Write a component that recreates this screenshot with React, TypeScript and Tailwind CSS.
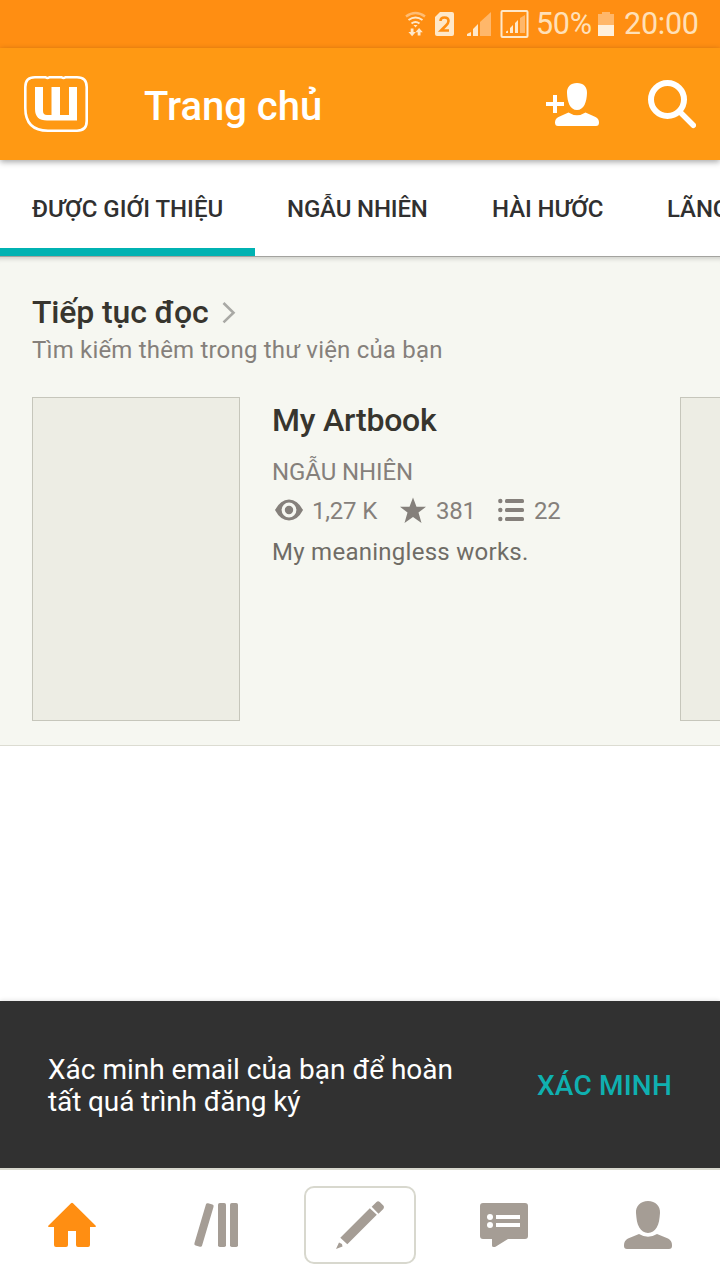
import type { ReactNode } from 'react'

const TABS = [
  { label: 'ĐƯỢC GIỚI THIỆU', className: 'w-[255px] tracking-[0.01px]' },
  { label: 'NGẪU NHIÊN', className: 'w-[205px] tracking-[-0.15px]' },
  { label: 'HÀI HƯỚC', className: 'w-[175px] tracking-[-0.1px]' },
  { label: 'LÃNG MẠN', className: 'w-[180px] tracking-[-0.1px]' },
]

function StatusBar() {
  return (
    <div className="flex h-12 shrink-0 items-center justify-end bg-[#ff8e12] pr-[21px] text-[#ffe0b8]">
      <svg width="132" height="48" viewBox="400 0 132 48" fill="none">
        {/* wifi with traffic arrows */}
        <path d="M406 16.500q9.500-7 19 0" stroke="#ffbd74" strokeWidth="2.500" />
        <path d="M408.500 20q7-5 14 0M411.500 23.500q4-3 8 0" stroke="#ffe8c9" strokeWidth="2" />
        <path d="M413.500 25h4l-2 2.500zM410.700 28.500h2.800v3.500h2.300l-3.700 4.200-3.700-4.200h2.300zM417.700 35.500v-3.300h-2.300l3.700-4.200 3.700 4.200h-2.300v3.300z" fill="#ffe8c9" />
        {/* sim 2 */}
        <path d="M440 12h12q2 0 2 2v20q0 2-2 2h-15q-2 0-2-2V17z" fill="#ffe8c9" />
        <path d="M440.500 21q0-3.500 4-3.500t4 3.500q0 2-2.500 4.500L441 30.500h8" stroke="#ff8e12" strokeWidth="2.600" />
        {/* mobile signal */}
        <path d="M467 36v-2l4-2v4zM473 36v-7l5-5v12z" fill="#ffe8c9" />
        <path d="M480 36V22l11-10v24z" fill="#ffb76a" />
        <rect x="501.500" y="11" width="26" height="26" rx="1" stroke="#ffe8c9" strokeWidth="2" />
        <path d="M506 33v-1.500l2-1V33zM510 33v-5l3-3v8zM515 33V23l3-3v13z" fill="#ffe8c9" />
        <path d="M520 33V18l5-3v18z" fill="#ffb76a" />
      </svg>
      <span className="ml-1 w-14 text-[30.5px] leading-[46px] tracking-[-0.3px] whitespace-nowrap">50%</span>
      <svg className="ml-[6px]" width="16" height="48" viewBox="598 0 16 48">
        <path d="M598 14h4v-2h8v2h4v12h-16z" fill="#ffb76a" />
        <path d="M598 25h16v11h-16z" fill="#fff0dc" />
      </svg>
      <span className="ml-[10px] w-[75px] text-[30.5px] leading-[46px] tracking-[-0.25px] whitespace-nowrap">20:00</span>
    </div>
  )
}

function Header() {
  return (
    <header className="z-20 flex h-28 shrink-0 items-center bg-[#ff9913] px-6 text-white shadow-[0_2px_6px_rgba(0,0,0,0.35)]">
      <svg width="64" height="56" viewBox="24 76 64 56" fill="none">
        <path
          d="M35 77.300h10.500q2 1.400 4 0h12q2 1.400 4 0H77q9.700 0 9.700 9.700v34q0 9.700-9.700 9.700H48Q25.300 130.700 25.300 108V87q0-9.700 9.700-9.700z"
          stroke="#fff"
          strokeWidth="2.600"
        />
        <path d="M35 87h8v24q0 4 4 4h4.500V87h8.500v28h9V87h8v33.500H47Q35 120.500 35 109z" fill="#fff" />
      </svg>
      <h1 className="ml-14 pt-[5px] text-[40px] leading-[48px] font-medium whitespace-nowrap">Trang chủ</h1>
      <svg className="ml-auto" width="54" height="56" viewBox="546 76 54 56" fill="#fff">
        <path d="M553 95h4v7h7v4h-7v7h-4v-7h-7v-4h7z" />
        <path d="M577 83c6.500 0 10.300 4 10 10-.3 9-3 17-10 17s-9.700-8-10-17c-.3-6 3.500-10 10-10z" />
        <path d="M568.500 112.500q8.500 5.500 17 0l10 4.500q3.500 1.700 3.500 5.500 0 3.500-3 3.500h-38q-3 0-3-3.500 0-3.800 3.500-5.500z" />
      </svg>
      <svg className="ml-12" width="48" height="56" viewBox="648 76 48 56" fill="none" stroke="#fff">
        <circle cx="667.500" cy="99.500" r="16.500" strokeWidth="6" />
        <path d="M680 112l13.300 13.300" strokeWidth="5.500" strokeLinecap="round" />
      </svg>
    </header>
  )
}

function Tabs() {
  return (
    <nav className="z-10 flex h-24 shrink-0 overflow-hidden bg-white">
      {TABS.map((tab, i) => (
        <div
          key={tab.label}
          className={`${tab.className} shrink-0 border-b-8 pt-[33px] pl-8 text-[24px] leading-8 font-medium whitespace-nowrap text-[#303030] ${i === 0 ? 'border-[#00b2b2]' : 'border-transparent'}`}
        >
          {tab.label}
        </div>
      ))}
    </nav>
  )
}

function Stats() {
  return (
    <div className="flex h-8 items-center text-[24px] leading-8 tracking-[-0.2px] text-[#85807b]">
      <svg width="32" height="32" viewBox="272 494 32 32">
        <path d="M275 510q5.500-10.500 14-10.500T303 510q-5.500 10.500-14 10.500T275 510z" fill="#85807b" />
        <circle cx="289" cy="510" r="5.800" fill="none" stroke="#f6f7f1" strokeWidth="3.200" />
      </svg>
      <span className="ml-2 w-[68px] pt-px whitespace-nowrap">1,27 K</span>
      <svg className="ml-[18px]" width="30" height="32" viewBox="398 494 30 32" fill="#85807b">
        <path d="M413 497.500l3.500 9.300h9.500l-7.500 5.800 3 10.400-8.500-6-8.500 6 3-10.400-7.500-5.800h9.500z" />
      </svg>
      <span className="ml-2 w-[40px] pt-px whitespace-nowrap">381</span>
      <svg className="ml-[21px]" width="28" height="32" viewBox="497 494 28 32" fill="#85807b">
        {[501, 510, 519].map((y) => (
          <g key={y}>
            <circle cx="500.300" cy={y} r="2.200" />
            <rect x="505" y={y - 2} width="19" height="4" rx="1.500" />
          </g>
        ))}
      </svg>
      <span className="ml-[9px] pt-px">22</span>
    </div>
  )
}

function ContinueReading() {
  return (
    <section className="h-[490px] shrink-0 overflow-hidden border-t border-b border-t-[#a3a39f] border-b-[#dcdcd2] bg-[#f6f7f1] pl-8 shadow-[inset_0_6px_4px_-4px_rgba(0,0,0,0.16)]">
      <div className="mt-[39px] flex h-8 items-center">
        <h2 className="w-[177px] text-[32px] leading-8 font-medium tracking-[-0.15px] whitespace-nowrap text-[#37352e]">Tiếp tục đọc</h2>
        <svg className="ml-[13px]" width="14" height="24" viewBox="222 301 14 24" fill="none">
          <path d="M223.500 304l10 9.700-10 9.700" stroke="#a9a9a5" strokeWidth="2.600" />
        </svg>
      </div>
      <p className="mt-[6px] text-[24px] leading-8 tracking-[0.19px] whitespace-nowrap text-[#85807b]">Tìm kiếm thêm trong thư viện của bạn</p>

      <div className="mt-[31px] flex">
        <div className="h-[324px] w-52 shrink-0 border border-[#c6c6bb] bg-[#edede4]" />
        <div className="ml-8 w-[408px] shrink-0 pt-[3px]">
          <h3 className="text-[32px] leading-10 font-medium tracking-[-0.2px] text-[#37352e]">My Artbook</h3>
          <p className="mt-4 text-[24px] leading-8 tracking-[-0.1px] text-[#85807b]">NGẪU NHIÊN</p>
          <div className="mt-[6px]">
            <Stats />
          </div>
          <p className="mt-[10px] text-[24px] leading-8 tracking-[0.27px] text-[#6f6c66]">My meaningless works.</p>
        </div>
        <div className="h-[324px] w-52 shrink-0 border border-[#c6c6bb] bg-[#edede4]" />
      </div>
    </section>
  )
}

function VerifyBar() {
  return (
    <div className="flex h-[167px] shrink-0 items-center justify-between bg-[#313131] px-12 pt-[2px] text-[28px] leading-8 shadow-[0_-1px_4px_rgba(0,0,0,0.1)]">
      <p className="whitespace-nowrap text-white">
        Xác minh email của bạn để hoàn
        <br />
        <span className="tracking-[-0.12px]">tất quá trình đăng ký</span>
      </p>
      <button className="font-medium tracking-[0.2px] whitespace-nowrap text-[#0fb0b0]">XÁC MINH</button>
    </div>
  )
}

function NavItem({ children }: { children: ReactNode }) {
  return <div className="flex flex-1 items-center justify-center">{children}</div>
}

function BottomNav() {
  return (
    <nav className="z-10 flex h-28 shrink-0 border-t-2 border-[#d8d8ce] bg-white">
      <NavItem>
        <svg width="48" height="48" viewBox="48 1201 48 48" fill="#ff8e12">
          <path d="M71 1203.300q1-.9 2 0l23 22.700q0 1-1 1h-5v18q0 2-2 2H78q-2 0-2-2v-14h-8v14q0 2-2 2H56q-2 0-2-2v-18h-5q-1 0-1-1z" />
        </svg>
      </NavItem>
      <NavItem>
        <svg width="48" height="48" viewBox="192 1201 48 48" fill="#a59d95">
          <rect x="200" y="1203" width="8" height="44" rx="1.800" transform="rotate(16.500 204 1225)" />
          <rect x="218" y="1203" width="8" height="44" rx="1.800" />
          <rect x="230" y="1203" width="8" height="44" rx="1.800" />
        </svg>
      </NavItem>
      <NavItem>
        <div className="flex h-[78px] w-28 items-center justify-center rounded-[10px] border-2 border-[#d8d8ce]">
          <svg width="48" height="48" viewBox="336 1201 48 48" fill="#a59d95">
            <path d="M336 1249l3-6.500 3 1.500.5 2.500zM340.300 1237.800l29.500-29.500 7 6.500-29.500 29.500zM371.700 1206.700l4.800-4.800q1.500-1.300 3.300 0l3.500 3.500q1.300 1.500 0 3.500l-4.800 4.800z" />
          </svg>
        </div>
      </NavItem>
      <NavItem>
        <svg width="48" height="48" viewBox="480 1201 48 48" fill="#a59d95">
          <path d="M483 1203h42q3 0 3 3v30q0 3-3 3h-17l-12.500 7.700q-3.500 1-3.500-1.200v-6.500h-9q-3 0-3-3v-30q0-3 3-3z" />
          <g fill="#fff">
            <circle cx="490" cy="1217" r="3" />
            <circle cx="490" cy="1225" r="3" />
            <path d="M496 1215h24v4h-24zM496 1223h24v4h-24z" />
          </g>
        </svg>
      </NavItem>
      <NavItem>
        <svg width="48" height="48" viewBox="624 1201 48 48" fill="#a59d95">
          <path d="M648 1201c7.500 0 12.500 5 12 12-.5 6-1 11-3.300 14.500-2 3.300-5 5.500-8.700 5.500s-6.700-2.200-8.700-5.500c-2.300-3.500-2.800-8.500-3.300-14.500-.5-7 4.500-12 12-12z" />
          <path d="M639 1234q9 5.500 18 0l11 4.500q4 2 4 6.500v1q0 3-3 3h-42q-3 0-3-3v-1q0-4.500 4-6.500z" />
        </svg>
      </NavItem>
    </nav>
  )
}

export default function App() {
  return (
    <div className="flex h-[1280px] w-[720px] flex-col overflow-hidden bg-white font-['Roboto','Noto_Sans',sans-serif]">
      <StatusBar />
      <Header />
      <Tabs />
      <ContinueReading />
      <main className="flex-1" />
      <VerifyBar />
      <BottomNav />
    </div>
  )
}
